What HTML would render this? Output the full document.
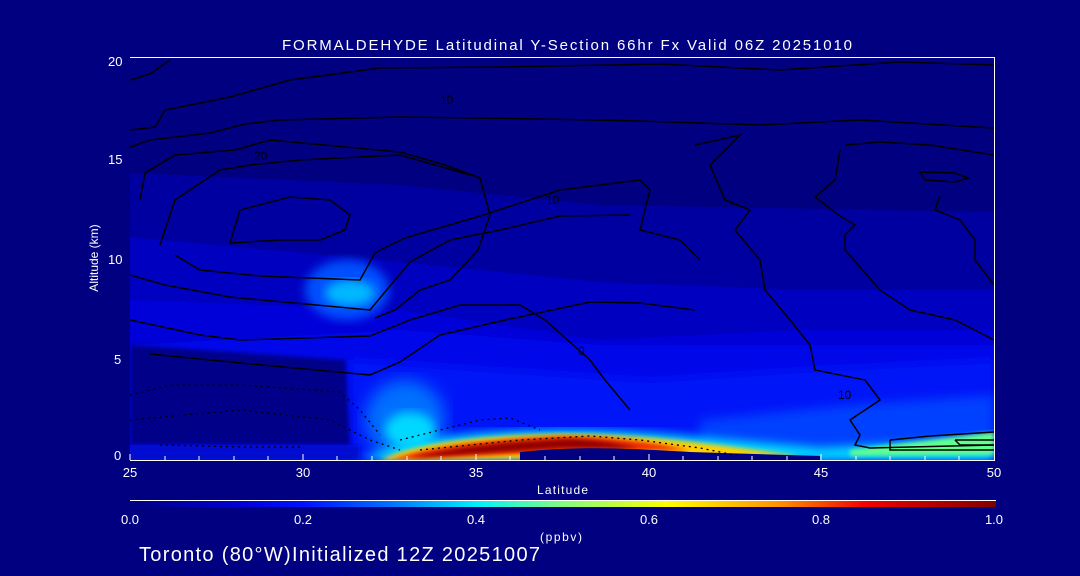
<!DOCTYPE html>
<html><head><meta charset="utf-8"><style>
html,body{margin:0;padding:0;background:#000080;width:1080px;height:576px;overflow:hidden}
svg{display:block}
text{font-family:"Liberation Sans",sans-serif;fill:#fff}
</style></head><body>
<svg width="1080" height="576" viewBox="0 0 1080 576" xmlns="http://www.w3.org/2000/svg">
<defs>
<clipPath id="pc"><rect x="130" y="58" width="864" height="402"/></clipPath>
<filter id="b2"><feGaussianBlur stdDeviation="2"/></filter>
<filter id="b5"><feGaussianBlur stdDeviation="5"/></filter>
<filter id="b8"><feGaussianBlur stdDeviation="8"/></filter>
<linearGradient id="cb" x1="0" x2="1" y1="0" y2="0">
<stop offset="0" stop-color="#000080"/>
<stop offset="0.12" stop-color="#0000d0"/>
<stop offset="0.2" stop-color="#0010ff"/>
<stop offset="0.3" stop-color="#0070ff"/>
<stop offset="0.4" stop-color="#00f0ff"/>
<stop offset="0.5" stop-color="#80ff80"/>
<stop offset="0.62" stop-color="#ffff00"/>
<stop offset="0.75" stop-color="#ff9000"/>
<stop offset="0.85" stop-color="#f00000"/>
<stop offset="1" stop-color="#800000"/>
</linearGradient>
</defs>
<rect width="1080" height="576" fill="#000080"/>
<g clip-path="url(#pc)">
<rect x="130" y="58" width="864" height="402" fill="#000080"/>
<polygon points="130,173 400,185 600,205 994,212 994,460 130,460" fill="#0000a0"/>
<polygon points="130,237 400,262 600,282 800,290 994,290 994,460 130,460" fill="#0000c0"/>
<polygon points="130,300 400,310 600,340 800,330 994,330 994,460 130,460" fill="#0000d8"/>
<polygon points="130,345 400,330 600,345 800,345 994,345 994,460 130,460" fill="#0008ea"/>
<polygon points="350,360 500,370 650,380 800,370 994,360 994,460 350,460" fill="#0018f8" filter="url(#b5)"/>
<polygon points="700,420 850,405 994,395 994,460 700,460" fill="#0040ff" filter="url(#b5)"/>
<polygon points="130,345 345,360 350,445 130,445" fill="#000088" filter="url(#b2)"/>
<rect x="130" y="445" width="230" height="15" fill="#0010d0" filter="url(#b2)"/>
<ellipse cx="347" cy="290" rx="42" ry="30" fill="#0050ff" filter="url(#b5)"/>
<ellipse cx="350" cy="293" rx="25" ry="13" fill="#00b8ff" filter="url(#b5)"/>
<ellipse cx="405" cy="420" rx="40" ry="40" fill="#0070ff" filter="url(#b8)"/>
<ellipse cx="410" cy="430" rx="25" ry="18" fill="#00d8ff" filter="url(#b5)"/>
<path d="M360,460 C400,440 460,432 560,430 C640,430 720,440 820,448 L994,440 L994,460 Z" fill="#00e0ff" filter="url(#b5)"/>
<path d="M850,450 L994,432 L994,455 L850,456 Z" fill="#60ff90" filter="url(#b2)"/>
<path d="M380,460 C420,442 480,436 560,434 C620,434 680,440 740,448 L800,456 L380,460 Z" fill="#ffd000" filter="url(#b2)"/>
<path d="M390,460 C430,446 480,440 560,436 C610,436 650,442 690,450 L560,452 L390,460 Z" fill="#f03000" filter="url(#b2)"/>
<path d="M410,458 C450,448 500,442 570,439 C600,440 620,444 640,448 L560,448 L410,458 Z" fill="#900000" filter="url(#b2)"/>
<path d="M520,452 C580,446 620,448 690,452 L820,456 L820,460 L520,460 Z" fill="#000080"/>
<g fill="none" stroke="#000" stroke-width="1.5">
<path d="M130,80 L150,74 L170,60"/>
<path d="M130,130 L155,127 L165,110 L200,103 L230,97 L290,80 L380,68 L500,67 L660,64 L780,70 L900,62 L994,65"/>
<path d="M130,147 L150,140 L210,133 L245,124 L280,120 L400,117 L540,119 L640,121 L760,125 L860,120 L994,128"/>
<path d="M140,200 L145,173 L175,155 L235,150 L270,140 L400,152 L445,165 L480,178 L490,215 L478,250 L450,280 L420,290 L395,310 L375,318"/>
<path d="M160,245 L175,200 L220,170 L250,165 L300,160 L400,155 L470,175"/>
<path d="M230,243 L240,210 L290,197 L330,200 L350,215 L345,230 L320,240 L280,240 Z"/>
<path d="M175,255 L200,270 L260,276 L360,280 L375,253 L380,250 L405,238 L480,216 L560,190 L640,180 L650,190 L640,230 L680,240 L700,260"/>
<path d="M130,275 L165,285 L230,297 L370,310 L410,262 L450,240 L500,230 L560,216 L630,215"/>
<path d="M130,320 L200,335 L240,340 L370,336 L410,320 L460,305 L520,305 L545,320 L590,360 L605,380 L630,410"/>
<path d="M150,354 L230,362 L370,375 L400,362 L440,335 L505,320 L590,302 L640,303 L695,310"/>
<path d="M695,145 L740,135 L710,165 L725,200 L750,210 L735,230 L760,260 L765,290 L790,320 L810,345 L815,370 L865,380 L880,400 L850,420 L860,435 L855,445 L870,448 L994,445"/>
<path d="M840,150 L835,180 L815,197 L840,216 L855,225 L845,235 L845,250 L880,290 L910,310 L955,320 L994,340"/>
<path d="M940,196 L935,210 L960,220 L975,240 L975,260 L994,285"/>
<path d="M920,172 L955,173 L968,178 L955,182 L925,180 Z"/>
<path d="M845,145 L880,142 L930,145 L994,155"/>
<path d="M890,440 L930,436 L994,432"/>
<path d="M890,440 L890,450 L994,450"/>
<path d="M955,440 L994,440 M955,440 L960,445 L994,445"/>
</g>
<g fill="none" stroke="#000" stroke-width="1.3" stroke-dasharray="2,4">
<path d="M130,395 L170,385 L240,385 L340,392 L360,410 L380,435"/>
<path d="M130,420 L240,410 L330,420 L370,440 L400,450"/>
<path d="M160,445 L240,447 L300,447"/>
<path d="M400,440 L480,420 L510,418 L540,430"/>
<path d="M420,450 L520,440 L590,436 L640,440 L700,448 L740,456"/>
</g>
</g>
<g font-size="12">
<text x="254" y="160" style="fill:#000">20</text>
<text x="440" y="104" style="fill:#000">10</text>
<text x="546" y="204" style="fill:#000">10</text>
<text x="578" y="355" style="fill:#000">0</text>
<text x="838" y="399" style="fill:#000">10</text>
</g>
<g stroke="#fff" stroke-width="1" fill="none">
<line x1="130" y1="57.5" x2="994" y2="57.5"/>
<line x1="994.5" y1="57" x2="994.5" y2="461"/>
<line x1="130" y1="460.5" x2="995" y2="460.5"/>
<path d="M130,460 v-6 M165,460 v-4 M199,460 v-4 M234,460 v-4 M268,460 v-4 M303,460 v-6 M337,460 v-4 M372,460 v-4 M407,460 v-4 M441,460 v-4 M476,460 v-6 M510,460 v-4 M545,460 v-4 M580,460 v-4 M614,460 v-4 M649,460 v-6 M683,460 v-4 M718,460 v-4 M752,460 v-4 M787,460 v-4 M821,460 v-6 M856,460 v-4 M890,460 v-4 M925,460 v-4 M959,460 v-4"/>
<line x1="130" y1="500.5" x2="996" y2="500.5"/>
</g>
<rect x="130" y="501" width="866" height="6" fill="url(#cb)"/>
<g font-size="13">
<text x="282" y="50" font-size="15" textLength="570" lengthAdjust="spacing">FORMALDEHYDE Latitudinal Y-Section 66hr  Fx Valid 06Z 20251010</text>
<text x="108" y="66">20</text><text x="108" y="164">15</text><text x="108" y="264">10</text><text x="114" y="364">5</text><text x="114" y="460">0</text>
<text x="130" y="477" text-anchor="middle">25</text><text x="303" y="477" text-anchor="middle">30</text><text x="476" y="477" text-anchor="middle">35</text><text x="649" y="477" text-anchor="middle">40</text><text x="821" y="477" text-anchor="middle">45</text><text x="994" y="477" text-anchor="middle">50</text>
<text x="537" y="494" font-size="12" textLength="51" lengthAdjust="spacing">Latitude</text>
<text x="130" y="524" text-anchor="middle">0.0</text><text x="303" y="524" text-anchor="middle">0.2</text><text x="476" y="524" text-anchor="middle">0.4</text><text x="649" y="524" text-anchor="middle">0.6</text><text x="821" y="524" text-anchor="middle">0.8</text><text x="994" y="524" text-anchor="middle">1.0</text>
<text x="540" y="541" font-size="12" textLength="42" lengthAdjust="spacing">(ppbv)</text>
<text x="98" y="258" font-size="12" text-anchor="middle" transform="rotate(-90 98 258)">Altitude (km)</text>
<text x="139" y="561" font-size="20" textLength="401" lengthAdjust="spacing">Toronto (80°W)Initialized 12Z 20251007</text>
</g>
</svg>
</body></html>
